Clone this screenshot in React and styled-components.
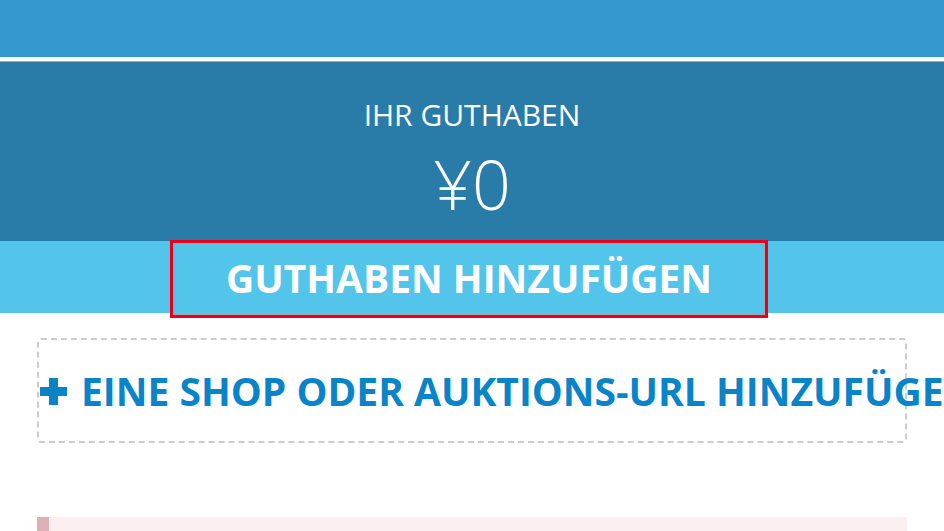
import React from "react";
import styled, { createGlobalStyle } from "styled-components";

const GlobalStyle = createGlobalStyle`
  html, body { margin: 0; padding: 0; overflow: hidden; background: #ffffff; }
  body { font-family: "Open Sans", "Noto Sans", sans-serif; }
  * { box-sizing: border-box; }
`;

const Page = styled.div`
  width: 944px;
  height: 531px;
  overflow: hidden;
  display: flex;
  flex-direction: column;
  & > * { flex: none; }
`;

const TopBar = styled.div`
  height: 57px;
  background: #3599d0;
`;

const Divider = styled.div`
  height: 5px;
  background: #ffffff;
  border-bottom: 1px solid #8fb3c8;
`;

const BalancePanel = styled.section`
  height: 179px;
  background: #297ca8;
  color: #ffffff;
  display: flex;
  flex-direction: column;
  align-items: center;
  padding-top: 33px;
`;

const BalanceLabel = styled.div`
  font-size: 30px;
  font-weight: 400;
  line-height: 40px;
`;

const BalanceValue = styled.div`
  font-size: 68px;
  font-weight: 300;
  line-height: 80px;
  margin-top: 9px;
`;

const AddBand = styled.div`
  height: 72px;
  background: #53c4ea;
  display: flex;
  justify-content: center;
`;

const AddButton = styled.button`
  position: relative;
  z-index: 1;
  width: 598px;
  height: 78px;
  margin: -1px 0 -5px -6px;
  padding: 0 0 4px;
  background: #53c4ea;
  border: 3px solid #e8001c;
  box-shadow: inset 0 0 0 1px #9aa8b0;
  color: #ffffff;
  font-family: "Open Sans", "Noto Sans", sans-serif;
  font-size: 39px;
  font-weight: 700;
  display: flex;
  align-items: center;
  justify-content: center;
  cursor: pointer;
`;

const Content = styled.div`
  padding: 0 37px;
  display: flex;
  flex-direction: column;
`;

const DashedBox = styled.div`
  margin-top: 25px;
  height: 105px;
  border: 2px dashed #cccccc;
  border-radius: 4px;
  display: flex;
  align-items: center;
  white-space: nowrap;
  overflow: visible;
`;

const UrlLink = styled.a`
  display: flex;
  align-items: center;
  gap: 14px;
  padding-left: 1px;
  color: #0a84c8;
  font-size: 39px;
  font-weight: 700;
  text-decoration: none;
  line-height: normal;
`;

const PlusIcon = styled.svg`
  width: 27px;
  height: 27px;
  flex: none;
  margin-top: 1px;
`;

const Alert = styled.div`
  margin-top: 74px;
  height: 60px;
  background: #fcefef;
  border-left: 12px solid #dcb0b4;
`;

export default function App() {
  return (
    <>
      <GlobalStyle />
      <Page>
        <TopBar />
        <Divider />
        <BalancePanel>
          <BalanceLabel>IHR GUTHABEN</BalanceLabel>
          <BalanceValue>¥0</BalanceValue>
        </BalancePanel>
        <AddBand>
          <AddButton>GUTHABEN HINZUFÜGEN</AddButton>
        </AddBand>
        <Content>
          <DashedBox>
            <UrlLink href="#">
              <PlusIcon viewBox="0 0 27 27">
                <path d="M9 0h9v9h9v9h-9v9H9v-9H0V9h9z" fill="#0a84c8" />
              </PlusIcon>
              EINE SHOP ODER AUKTIONS-URL HINZUFÜGEN
            </UrlLink>
          </DashedBox>
          <Alert />
        </Content>
      </Page>
    </>
  );
}
